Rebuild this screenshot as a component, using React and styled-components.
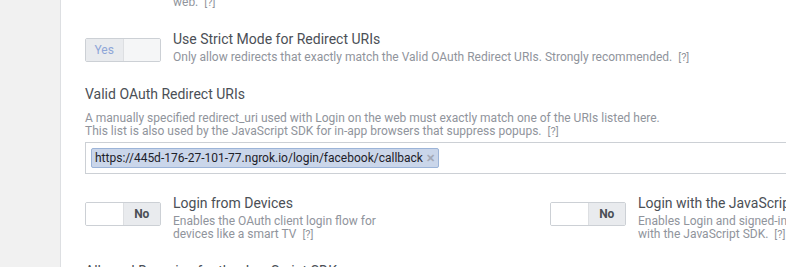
import React from "react";
import styled, { createGlobalStyle } from "styled-components";

const GlobalStyle = createGlobalStyle`
  html, body {
    margin: 0;
    padding: 0;
    background: #fff;
    overflow: hidden;
  }
  body {
    font-family: Roboto, "Liberation Sans", Arial, sans-serif;
    -webkit-font-smoothing: antialiased;
  }
`;

const Page = styled.div`
  display: flex;
  height: 267px;
  overflow: hidden;
`;

const Sidebar = styled.div`
  flex: 0 0 60px;
  background-color: #f1f1f1;
  border-right: 1px solid #dddfe2;
`;

const Content = styled.div`
  flex: 0 0 900px;
  padding-left: 24px;
  box-sizing: border-box;
`;

const Tail = styled.div`
  margin-top: -6px;
  padding-left: 88px;
  font-size: 12px;
  line-height: 16px;
  color: #90949c;
`;

const Help = styled.span`
  margin-left: 6px;
  font-size: 11px;
  color: #90949c;
`;

const SettingRow = styled.div`
  display: flex;
  align-items: flex-start;
  margin-top: ${(p) => p.$top || 0}px;
`;

const Toggle = styled.div`
  flex: 0 0 auto;
  display: flex;
  width: 76px;
  height: 24px;
  margin-top: 8px;
  margin-right: 12px;
  border: 1px solid #ccd0d5;
  border-radius: 2px;
  box-sizing: border-box;
  overflow: hidden;
  font-size: 12px;
`;

const ToggleHalf = styled.div`
  flex: 1;
  display: flex;
  align-items: center;
  justify-content: center;
  background-color: ${(p) => (p.$active ? "#e9ebee" : p.$dim ? "#f5f6f7" : "#fff")};
  color: ${(p) => (p.$on ? "#8ea6d8" : "#4b4f56")};
  font-weight: ${(p) => (p.$on ? 400 : 700)};
  border-left: ${(p) => (p.$split ? "1px solid #dddfe2" : "none")};
`;

const SettingText = styled.div`
  display: flex;
  flex-direction: column;
  width: ${(p) => p.$width || "auto"};
`;

const Title = styled.div`
  font-size: 14px;
  line-height: 18px;
  color: #4b4f56;
  white-space: nowrap;
`;

const Desc = styled.div`
  margin-top: 3px;
  font-size: 12px;
  line-height: 13px;
  color: #90949c;
`;

const Heading = styled.div`
  margin-top: ${(p) => p.$top || 0}px;
  font-size: 14px;
  line-height: 16px;
  color: #4b4f56;
  white-space: nowrap;
`;

const FieldDesc = styled.div`
  margin-top: 10px;
  font-size: 12px;
  line-height: 13px;
  color: #90949c;
`;

const TagInput = styled.div`
  margin-top: 4px;
  display: flex;
  align-items: center;
  height: 32px;
  padding: 0 5px;
  border: 1px solid #ccd0d5;
  border-right: none;
  box-sizing: border-box;
`;

const Tag = styled.div`
  display: flex;
  align-items: center;
  height: 20px;
  padding: 0 3px;
  background-color: #cad6ea;
  border: 1px solid #9cb4d8;
  border-radius: 2px;
  box-sizing: border-box;
  font-size: 12px;
  color: #1d2129;
`;

const Remove = styled.span`
  margin-left: 3px;
  color: #a3a9b6;
  font-size: 11px;
  font-weight: 700;
`;

const Columns = styled.div`
  display: grid;
  grid-template-columns: 465px 1fr;
  margin-top: 20px;
`;

export default function App() {
  return (
    <>
      <GlobalStyle />
      <Page>
        <Sidebar />
        <Content>
          <Tail>
            web.<Help>[?]</Help>
          </Tail>

          <SettingRow $top={19}>
            <Toggle>
              <ToggleHalf $active $on>Yes</ToggleHalf>
              <ToggleHalf $dim $split />
            </Toggle>
            <SettingText>
              <Title>Use Strict Mode for Redirect URIs</Title>
              <Desc>
                Only allow redirects that exactly match the Valid OAuth Redirect URIs. Strongly recommended.
                <Help>[?]</Help>
              </Desc>
            </SettingText>
          </SettingRow>

          <Heading $top={22}>Valid OAuth Redirect URIs</Heading>
          <FieldDesc>
            A manually specified redirect_uri used with Login on the web must exactly match one of the URIs listed here.
            <br />
            This list is also used by the JavaScript SDK for in-app browsers that suppress popups.
            <Help>[?]</Help>
          </FieldDesc>
          <TagInput>
            <Tag>
              https://445d-176-27-101-77.ngrok.io/login/facebook/callback
              <Remove>✕</Remove>
            </Tag>
          </TagInput>

          <Columns>
            <SettingRow>
              <Toggle>
                <ToggleHalf />
                <ToggleHalf $active $split>No</ToggleHalf>
              </Toggle>
              <SettingText $width="230px">
                <Title>Login from Devices</Title>
                <Desc>
                  Enables the OAuth client login flow for devices like a smart TV
                  <Help>[?]</Help>
                </Desc>
              </SettingText>
            </SettingRow>
            <SettingRow>
              <Toggle>
                <ToggleHalf />
                <ToggleHalf $active $split>No</ToggleHalf>
              </Toggle>
              <SettingText $width="230px">
                <Title>Login with the JavaScript SDK</Title>
                <Desc>
                  Enables Login and signed-in functionality with the JavaScript SDK.
                  <Help>[?]</Help>
                </Desc>
              </SettingText>
            </SettingRow>
          </Columns>

          <Heading $top={22}>Allowed Domains for the JavaScript SDK</Heading>
        </Content>
      </Page>
    </>
  );
}
